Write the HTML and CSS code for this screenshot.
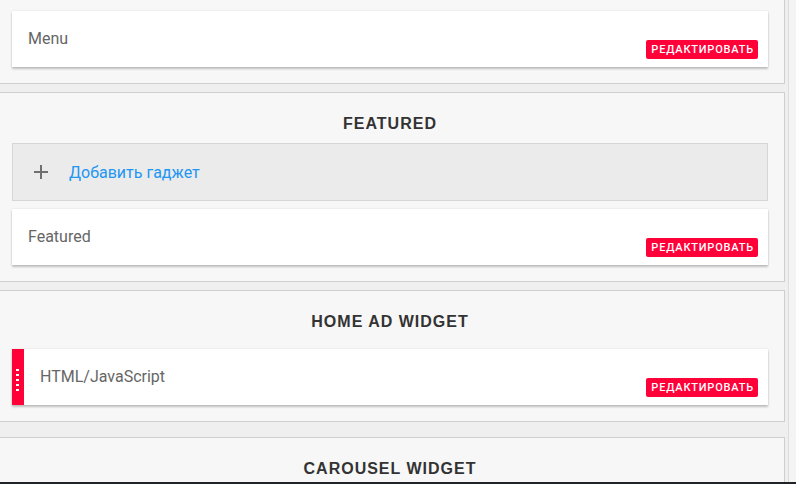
FILE: index.html
```html
<!DOCTYPE html>
<html lang="ru">
<head>
    <meta charset="UTF-8">
    <meta name="viewport" content="width=device-width, initial-scale=1.0">
    <title>Макет</title>
    <link rel="stylesheet" href="styles.css">
</head>
<body>
    <div class="main">
        <div class="section">
            <div class="widget">
                <span class="widget-title">Menu</span>
                <button class="edit-btn">Редактировать</button>
            </div>
        </div>

        <div class="section">
            <h2 class="section-title">FEATURED</h2>
            <div class="add-gadget">
                <span class="add-icon">
                    <svg width="14" height="14" viewBox="0 0 14 14"><path d="M7 0v14M0 7h14" stroke="#707070" stroke-width="2"/></svg>
                </span>
                <a class="add-link" href="#">Добавить гаджет</a>
            </div>
            <div class="widget">
                <span class="widget-title">Featured</span>
                <button class="edit-btn">Редактировать</button>
            </div>
        </div>

        <div class="section">
            <h2 class="section-title">HOME AD WIDGET</h2>
            <div class="widget dragging">
                <span class="handle">
                    <i></i><i></i><i></i><i></i><i></i>
                </span>
                <span class="widget-title">HTML/JavaScript</span>
                <button class="edit-btn">Редактировать</button>
            </div>
        </div>

        <div class="section section-gap">
            <h2 class="section-title">CAROUSEL WIDGET</h2>
        </div>
    </div>
    <div class="rail"></div>
    <div class="bottom-bar"></div>
</body>
</html>
```

FILE: styles.css
```css
* {
    box-sizing: border-box;
    margin: 0;
    padding: 0;
}

body {
    font-family: Roboto, "Noto Sans", sans-serif;
    background: #efefef;
    display: flex;
    height: 484px;
    overflow: hidden;
}

.main {
    width: 793px;
    margin-left: -5px;
    margin-top: -18px;
    padding-right: 3px;
    flex-shrink: 0;
}

.rail {
    flex: 1;
    border-left: 1px solid #dcdcdc;
    background: #f4f4f4;
}

.section {
    background: #f7f7f7;
    border: 1px solid #cfcfcf;
    padding: 20px 16px 16px;
    margin-bottom: 8px;
}

.section-gap {
    margin-top: 15px;
    height: 80px;
}

.section-title {
    font-family: "Liberation Sans", Arial, sans-serif;
    font-size: 16px;
    font-weight: bold;
    line-height: 20px;
    letter-spacing: 1px;
    color: #333;
    text-align: center;
    padding-top: 1px;
    padding-bottom: 9px;
}

.add-gadget {
    height: 58px;
    background: #ebebeb;
    border: 1px solid #d6d6d6;
    display: flex;
    align-items: center;
    padding-left: 21px;
}

.add-icon {
    display: flex;
    margin-right: 21px;
}

.add-link {
    color: #2196f3;
    font-size: 16px;
    text-decoration: none;
}

.widget {
    margin-top: 8px;
    height: 56px;
    background: #fff;
    box-shadow: 0 2px 2px rgba(0, 0, 0, 0.22), 0 0 2px rgba(0, 0, 0, 0.1);
    display: flex;
    align-items: center;
    padding: 0 10px 0 16px;
}

.widget-title {
    flex: 1;
    font-size: 16px;
    color: #666;
    margin-top: -1px;
}

.edit-btn {
    align-self: flex-end;
    margin-bottom: 8px;
    height: 19px;
    padding: 0 4px 0 5px;
    border: none;
    border-radius: 2px;
    background: #ff0038;
    color: #fff;
    font-family: Roboto, sans-serif;
    font-size: 11px;
    font-weight: 500;
    letter-spacing: 0.8px;
    text-transform: uppercase;
    cursor: pointer;
}

.dragging {
    padding-left: 0;
}

.handle {
    align-self: stretch;
    width: 12px;
    background: #ff0038;
    margin-right: 16px;
    display: flex;
    flex-direction: column;
    justify-content: center;
    align-items: flex-start;
    gap: 3px;
    padding-left: 4px;
    padding-top: 5px;
}

.handle i {
    display: block;
    width: 3px;
    height: 2px;
    background: #fff;
}

.bottom-bar {
    position: fixed;
    left: 0;
    right: 0;
    bottom: 0;
    height: 2px;
    background: #1f2327;
}
```
